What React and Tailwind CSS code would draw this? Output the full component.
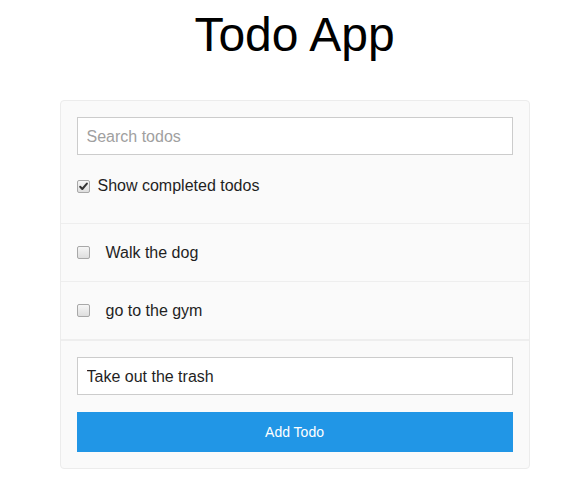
import React, { useState } from 'react';

const Checkbox = ({ checked, onChange }) => (
  <span className="relative inline-flex w-[13px] h-[13px] shrink-0">
    <input
      type="checkbox"
      checked={checked}
      onChange={onChange}
      className="appearance-none w-[13px] h-[13px] m-0 rounded-[2px] border border-[#a8a8a8] bg-linear-to-b from-[#f6f6f6] to-[#dedede]"
    />
    {checked && (
      <svg
        viewBox="0 0 13 13"
        className="pointer-events-none absolute left-0 top-0 w-[13px] h-[13px]"
      >
        <path d="M3.2 6.8 L5.3 9 L9.9 3.6" fill="none" stroke="#333" strokeWidth="2" strokeLinecap="round" strokeLinejoin="round" />
      </svg>
    )}
  </span>
);

const TodoItem = ({ todo, onToggle }) => (
  <div className="flex items-center h-[58px] px-4 border-b border-[#eeeeee]">
    <Checkbox checked={todo.completed} onChange={() => onToggle(todo.id)} />
    <span className="ml-4 text-base text-[#1f1f1f]">{todo.text}</span>
  </div>
);

export default function App() {
  const [search, setSearch] = useState('');
  const [showCompleted, setShowCompleted] = useState(true);
  const [todos, setTodos] = useState([
    { id: 1, text: 'Walk the dog', completed: false },
    { id: 2, text: 'go to the gym', completed: false },
  ]);
  const [newTodo, setNewTodo] = useState('Take out the trash');

  const toggleTodo = (id) => {
    setTodos(todos.map(t => (t.id === id ? { ...t, completed: !t.completed } : t)));
  };

  const addTodo = (e) => {
    e.preventDefault();
    if (!newTodo.trim()) return;
    setTodos([...todos, { id: Date.now(), text: newTodo, completed: false }]);
    setNewTodo('');
  };

  const visible = todos.filter(t =>
    (showCompleted || !t.completed) && t.text.toLowerCase().includes(search.toLowerCase())
  );

  return (
    <div className="w-full min-h-[495px] overflow-hidden bg-white font-['Liberation_Sans',Arial,sans-serif]">
      <div className="w-[589px]">
        <h1 className="pt-[11px] text-center text-[48px] leading-[48px] font-normal text-black">
          Todo App
        </h1>

        <div className="mt-[41px] mx-auto w-[470px] rounded border border-[#ececec] bg-[#fafafa]">
          {/* Search + filter */}
          <div className="px-4 pt-4 pb-[25px] border-b border-[#eeeeee]">
            <input
              type="text"
              value={search}
              onChange={e => setSearch(e.target.value)}
              placeholder="Search todos"
              className="block w-full h-[38px] px-[9px] pt-px bg-white border border-[#cccccc] text-base text-[#1f1f1f] placeholder:text-[#a0a0a0] outline-none"
            />
            <label className="mt-[19px] flex items-center h-[24px]">
              <Checkbox checked={showCompleted} onChange={() => setShowCompleted(!showCompleted)} />
              <span className="ml-2 text-base text-[#1f1f1f]">Show completed todos</span>
            </label>
          </div>

          {/* List */}
          {visible.map(todo => (
            <TodoItem key={todo.id} todo={todo} onToggle={toggleTodo} />
          ))}

          {/* Add form */}
          <form onSubmit={addTodo} className="p-4 border-t border-[#eeeeee]">
            <input
              type="text"
              value={newTodo}
              onChange={e => setNewTodo(e.target.value)}
              className="block w-full h-[38px] px-[9px] pt-px bg-white border border-[#cccccc] text-base text-[#1f1f1f] outline-none"
            />
            <button
              type="submit"
              className="mt-[17px] block w-full h-[40px] bg-[#2196e6] text-white text-sm"
            >
              Add Todo
            </button>
          </form>
        </div>
      </div>
    </div>
  );
}
